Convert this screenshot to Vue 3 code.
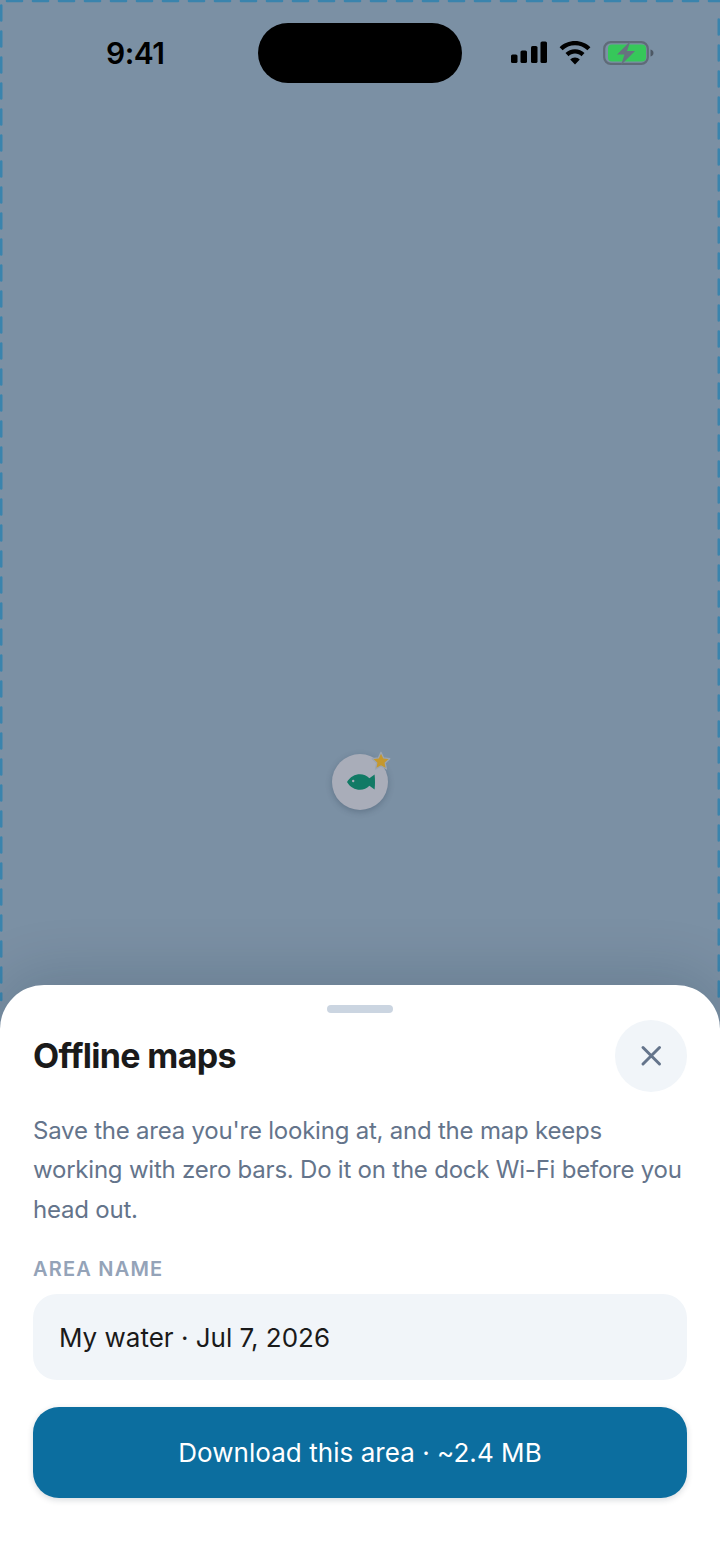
<template>
  <div class="phone">
    <!-- map area, empty apart from the pin and the dashed region outline -->
    <div class="map">
      <svg class="region" width="720" height="1564" viewBox="0 0 720 1564" aria-hidden="true">
        <line class="dash" x1="7" y1="1" x2="720" y2="1" />
        <line class="dash" x1="1.2" y1="5.5" x2="1.2" y2="1000" />
        <line class="dash" x1="718.8" y1="19.5" x2="718.8" y2="1000" />
      </svg>

      <div class="pin">
        <svg class="fish" viewBox="0 0 28 16" width="28" height="16" fill="#117a65" aria-hidden="true">
          <path d="M0 8C3 2.800 8 .2 13 .2c3.600 0 6.800 1.600 9.400 4L27.600 .4c.3 2.500.4 5 .4 7.600s-.1 5.100-.4 7.600l-5.200-3.800c-2.600 2.400-5.800 4-9.400 4C8 15.800 3 13.200 0 8z" />
          <circle cx="6.200" cy="7" r="1.200" fill="#a9adb9" />
        </svg>
        <svg class="star" viewBox="0 0 24 24" width="22" height="22" aria-hidden="true">
          <path d="M12 2.500l2.900 6.200 6.700.8-5 4.600 1.400 6.700-6-3.400-6 3.400 1.400-6.700-5-4.600 6.700-.8z" fill="#c4982f" stroke="#9ca5b2" stroke-width="1.400" stroke-linejoin="round" />
        </svg>
      </div>
    </div>

    <div class="status">
      <span class="time">9:41</span>
      <div class="island"></div>
      <div class="status-icons">
        <svg width="36" height="22" viewBox="0 0 36 22" aria-hidden="true">
          <rect x="0" y="13.500" width="6.500" height="8.500" rx="1.600" />
          <rect x="9.500" y="9.500" width="6.500" height="12.500" rx="1.600" />
          <rect x="20" y="5" width="6.500" height="17" rx="1.600" />
          <rect x="29.500" y="0.500" width="6.500" height="21.500" rx="1.600" />
        </svg>
        <svg width="32" height="24" viewBox="0 0 32 24" aria-hidden="true">
          <path d="M16 0C10 0 4.600 2.300.6 6.200l3 3.100C6.800 6.200 11.200 4.300 16 4.300s9.200 1.900 12.400 5l3-3.100C27.400 2.300 22 0 16 0z" />
          <path d="M16 8.200c-3.700 0-7.100 1.500-9.500 3.900l3 3.100c1.700-1.700 4-2.700 6.500-2.700s4.800 1 6.500 2.700l3-3.100c-2.400-2.400-5.800-3.900-9.500-3.900z" />
          <path d="M16 16.500c-1.900 0-3.600.8-4.800 2L16 23.500l4.800-5c-1.200-1.200-2.900-2-4.800-2z" />
        </svg>
        <svg width="51" height="24" viewBox="0 0 51 24" aria-hidden="true">
          <rect x="1.200" y="1.200" width="43.600" height="21.600" rx="6.500" fill="none" stroke="#5f6b78" stroke-width="2.200" />
          <rect x="5" y="3.500" width="38" height="17" rx="4" fill="#36c75a" />
          <path d="M47.500 8.500c1.800.5 3 1.800 3 3.500s-1.200 3-3 3.500z" fill="#4d5864" />
          <path d="M27.500 0L14 13.500h7.500L18 24l14-14h-8z" fill="#66727f" />
        </svg>
      </div>
    </div>

    <section class="sheet">
      <div class="handle"></div>
      <header class="sheet-head">
        <h1 class="title">Offline maps</h1>
        <button class="close" aria-label="Close">
          <svg width="24" height="24" viewBox="0 0 24 24" fill="none" stroke="#64748b" stroke-width="3" stroke-linecap="round" aria-hidden="true">
            <path d="M4 3.500l16.500 16.500M20.500 3.500L4 20" />
          </svg>
        </button>
      </header>
      <p class="desc">Save the area you're looking at, and the map keeps working with zero bars. Do it on the dock Wi-Fi before you head out.</p>
      <div class="label">AREA NAME</div>
      <div class="field">{{ areaName }}</div>
      <button class="download">Download this area · ~2.4 MB</button>
    </section>
  </div>
</template>

<script setup>
import { ref } from 'vue'

const areaName = ref('My water · Jul 7, 2026')
</script>

<style>
html,
body {
  margin: 0;
  background: #fff;
}
</style>

<style scoped>
.phone {
  position: relative;
  width: 720px;
  height: 1564px;
  overflow: hidden;
  font-family: Inter, "Liberation Sans", sans-serif;
  background: #7b90a4;
}

.map {
  position: absolute;
  inset: 0;
}

.region {
  position: absolute;
  inset: 0;
}

.dash {
  stroke: #3a84ad;
  stroke-width: 2.6;
  stroke-linecap: round;
  stroke-dasharray: 15 11;
}

.pin {
  position: absolute;
  left: 332px;
  top: 754px;
  width: 56px;
  height: 56px;
  border-radius: 50%;
  background: #a9adb9;
  box-shadow: 0 2px 6px rgba(40, 55, 75, 0.3);
  display: flex;
  align-items: center;
  justify-content: center;
}

.fish {
  margin-left: 2px;
}

.star {
  position: absolute;
  top: -4px;
  right: -4px;
}

.status {
  position: absolute;
  top: 0;
  left: 0;
  right: 0;
  height: 106px;
}

.time {
  position: absolute;
  left: 106px;
  top: 35px;
  font-size: 30px;
  line-height: 36px;
  font-weight: 600;
  letter-spacing: -0.5px;
  color: #000;
}

.island {
  position: absolute;
  left: 258px;
  top: 23px;
  width: 204px;
  height: 60px;
  border-radius: 30px;
  background: #000;
}

.status-icons {
  position: absolute;
  left: 511px;
  top: 41px;
  display: flex;
  gap: 12px;
  align-items: flex-start;
}

.sheet {
  position: absolute;
  left: 0;
  right: 0;
  bottom: 0;
  height: 579px;
  box-sizing: border-box;
  padding: 20px 33px 0;
  background: #fff;
  border-radius: 44px 44px 0 0;
  box-shadow: 0 -10px 60px rgba(15, 30, 50, 0.16);
}

.handle {
  width: 66px;
  height: 8px;
  margin: 0 auto 7px;
  border-radius: 4px;
  background: #cbd5e1;
}

.sheet-head {
  display: flex;
  align-items: center;
  justify-content: space-between;
}

.title {
  margin: 0;
  font-size: 34px;
  line-height: 40px;
  font-weight: 700;
  letter-spacing: -0.68px;
  color: #1a1a1a;
}

.close {
  width: 72px;
  height: 71.500px;
  padding: 0;
  border: none;
  border-radius: 50%;
  background: #f1f5f9;
  display: flex;
  align-items: center;
  justify-content: center;
}

.desc {
  margin: 19px 0 0;
  font-size: 24px;
  line-height: 39.600px;
  letter-spacing: -0.22px;
  color: #64748b;
}

.label {
  margin-top: 28px;
  font-size: 20px;
  line-height: 24px;
  font-weight: 600;
  letter-spacing: 1.200px;
  color: #94a3b8;
}

.field {
  margin-top: 13px;
  height: 86px;
  box-sizing: border-box;
  padding: 0 26px;
  display: flex;
  align-items: center;
  border-radius: 24px;
  background: #f1f5f9;
  font-size: 26px;
  color: #1a1a1a;
}

.download {
  display: block;
  width: 100%;
  height: 91.500px;
  margin-top: 26.500px;
  padding: 0;
  border: none;
  border-radius: 26px;
  background: #0c6e9f;
  box-shadow: 0 2px 6px rgba(15, 30, 50, 0.16);
  font-family: inherit;
  font-size: 26px;
  letter-spacing: 0.05px;
  color: #fff;
}
</style>
